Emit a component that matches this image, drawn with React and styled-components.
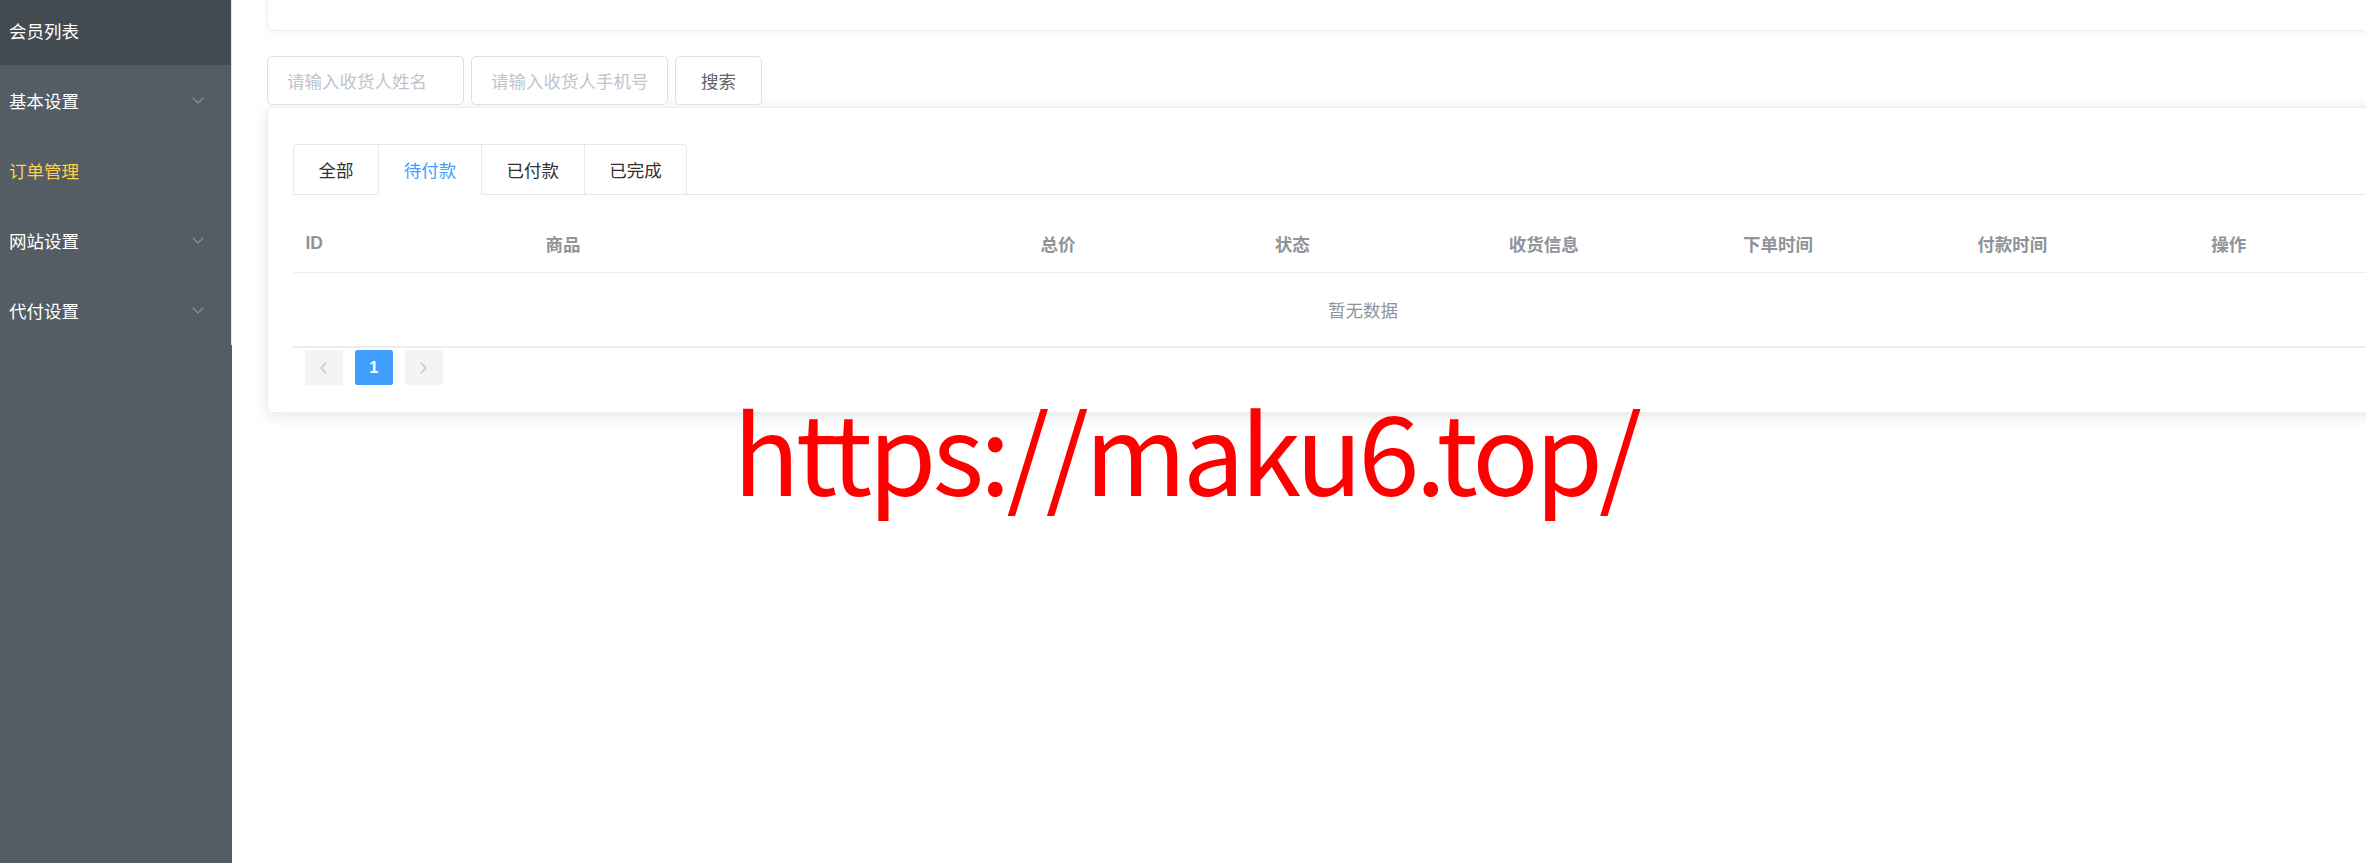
import styled, { createGlobalStyle } from 'styled-components';

const GlobalStyle = createGlobalStyle`
    html, body {
        margin: 0;
        padding: 0;
        overflow: hidden;
        background: #fff;
    }

    * {
        box-sizing: border-box;
    }

    body {
        font-family: "Liberation Sans", "Noto Sans CJK SC", sans-serif;
        font-size: 17.5px;
        color: #303133;
    }
`;

const MENU = [
    { label: '会员列表', hover: true },
    { label: '基本设置', sub: true },
    { label: '订单管理', active: true },
    { label: '网站设置', sub: true },
    { label: '代付设置', sub: true },
];

const TABS = ['全部', '待付款', '已付款', '已完成'];

const COLUMNS = ['ID', '商品', '总价', '状态', '收货信息', '下单时间', '付款时间', '操作'];

const Page = styled.div`
    display: flex;
    height: 100vh;
    position: relative;
`;

const Aside = styled.aside`
    width: 232px;
    flex-shrink: 0;
    height: 100%;
    background: #545c64;
    overflow: hidden;
`;

const Menu = styled.ul`
    list-style: none;
    margin: -5px 0 0;
    padding: 0;
    width: 232px;
    border-right: 1px solid #e6e6e6;
`;

const MenuItem = styled.li`
    display: flex;
    align-items: center;
    justify-content: space-between;
    height: 70px;
    padding: 0 27px 0 9px;
    font-family: "Noto Sans CJK SC", sans-serif;
    font-size: 17.5px;
    color: ${({ $active }) => ($active ? '#ffd04b' : '#fff')};
    background: ${({ $hover }) => ($hover ? '#434a50' : 'transparent')};
    cursor: pointer;
`;

const Main = styled.main`
    flex: 1;
    padding-left: 35px;
    min-width: 0;
`;

const Content = styled.div`
    width: 2192px;
    display: flex;
    flex-direction: column;
`;

const HeaderCard = styled.div`
    height: 50px;
    margin-top: -19px;
    border: 1px solid #ebeef5;
    border-radius: 5px;
    background: #fff;
    box-shadow: 0 2px 10px 0 rgba(0, 0, 0, 0.04);
`;

const SearchBar = styled.div`
    display: flex;
    gap: 7px;
    margin-top: 25px;
    position: relative;
    z-index: 1;
`;

const SearchInput = styled.input`
    width: 197px;
    height: 49px;
    padding: 0 19px;
    border: 1px solid #dcdfe6;
    border-radius: 5px;
    font-family: "Noto Sans CJK SC", sans-serif;
    font-size: 17.5px;
    color: #606266;
    background: #fff;
    outline: none;

    &::placeholder {
        color: #c0c4cc;
    }
`;

const SearchButton = styled.button`
    height: 49px;
    padding: 0 25px;
    border: 1px solid #dcdfe6;
    border-radius: 5px;
    background: #fff;
    font-family: "Noto Sans CJK SC", sans-serif;
    font-size: 17.5px;
    color: #606266;
    cursor: pointer;
`;

const Card = styled.div`
    margin-top: 2px;
    padding: 36px 25px 25px;
    border: 1px solid #ebeef5;
    border-radius: 5px;
    background: #fff;
    box-shadow: 0 2.5px 15px 0 rgba(0, 0, 0, 0.1);
`;

const TabsHeader = styled.div`
    display: flex;
    border-bottom: 1px solid #e4e7ed;
    margin-bottom: 19px;
`;

const TabsNav = styled.div`
    display: flex;
    border: 1px solid #e4e7ed;
    border-bottom: none;
    border-radius: 5px 5px 0 0;
    margin-bottom: -1px;
`;

const Tab = styled.div`
    height: 50px;
    line-height: 50px;
    padding: 0 24.6px;
    font-family: "Noto Sans CJK SC", sans-serif;
    font-size: 17.5px;
    color: ${({ $active }) => ($active ? '#409eff' : '#303133')};
    border-left: 1px solid #e4e7ed;
    border-bottom: 1px solid ${({ $active }) => ($active ? '#fff' : '#e4e7ed')};

    &:first-child {
        border-left: none;
    }
`;

const Table = styled.div`
    width: 2140px;
`;

const HeadRow = styled.div`
    display: grid;
    grid-template-columns: 240px 495px repeat(6, 1fr);
    height: 59px;
    border-bottom: 1px solid #ebeef5;
`;

const HeadCell = styled.div`
    display: flex;
    align-items: center;
    padding: 0 12.5px;
    font-weight: bold;
    color: #909399;
    font-size: 17.5px;
`;

const Empty = styled.div`
    height: 75px;
    line-height: 73px;
    text-align: center;
    color: #909399;
    font-family: "Noto Sans CJK SC", sans-serif;
    font-size: 17.5px;
    border-bottom: 2px solid #ebeef5;
`;

const Pager = styled.div`
    display: flex;
    gap: 12.5px;
    padding: 2px 0 2px 12px;
`;

const PageButton = styled.button`
    width: 37.5px;
    height: 35px;
    padding: 0;
    border: none;
    border-radius: 2.5px;
    display: flex;
    align-items: center;
    justify-content: center;
    background: ${({ $active }) => ($active ? '#409eff' : '#f4f4f5')};
    color: ${({ $active }) => ($active ? '#fff' : '#c0c4cc')};
    font-family: "Liberation Sans", sans-serif;
    font-weight: bold;
    font-size: 16.25px;
`;

const Watermark = styled.div`
    position: absolute;
    left: 733px;
    top: 393px;
    font-family: "Noto Sans CJK SC", sans-serif;
    font-size: 110px;
    line-height: 110px;
    letter-spacing: -4px;
    color: #ff0000;
    white-space: nowrap;
    pointer-events: none;
`;

const ChevronDown = () => (
    <svg width="12" height="7" viewBox="0 0 12 7" fill="none">
        <polyline points="0.6,0.6 6,6 11.4,0.6" stroke="#909399" strokeWidth="1.2" />
    </svg>
);

const Arrow = ({ dir }) => (
    <svg width="7" height="12" viewBox="0 0 7 12" fill="none">
        {dir === 'left' ? (
            <polyline points="6,0.8 1.2,6 6,11.2" stroke="#c0c4cc" strokeWidth="1.4" />
        ) : (
            <polyline points="1,0.8 5.8,6 1,11.2" stroke="#c0c4cc" strokeWidth="1.4" />
        )}
    </svg>
);

export default function App() {
    return (
        <Page>
            <GlobalStyle />
            <Aside>
                <Menu>
                    {MENU.map((item) => (
                        <MenuItem key={item.label} $active={item.active} $hover={item.hover}>
                            <span>{item.label}</span>
                            {item.sub && <ChevronDown />}
                        </MenuItem>
                    ))}
                </Menu>
            </Aside>
            <Main>
                <Content>
                    <HeaderCard />
                    <SearchBar>
                        <SearchInput placeholder="请输入收货人姓名" />
                        <SearchInput placeholder="请输入收货人手机号" />
                        <SearchButton>搜索</SearchButton>
                    </SearchBar>
                    <Card>
                        <TabsHeader>
                            <TabsNav>
                                {TABS.map((tab) => (
                                    <Tab key={tab} $active={tab === '待付款'}>
                                        {tab}
                                    </Tab>
                                ))}
                            </TabsNav>
                        </TabsHeader>
                        <Table>
                            <HeadRow>
                                {COLUMNS.map((col) => (
                                    <HeadCell key={col}>{col}</HeadCell>
                                ))}
                            </HeadRow>
                            <Empty>暂无数据</Empty>
                        </Table>
                        <Pager>
                            <PageButton>
                                <Arrow dir="left" />
                            </PageButton>
                            <PageButton $active>1</PageButton>
                            <PageButton>
                                <Arrow dir="right" />
                            </PageButton>
                        </Pager>
                    </Card>
                </Content>
            </Main>
            <Watermark>https://maku6.top/</Watermark>
        </Page>
    );
}
